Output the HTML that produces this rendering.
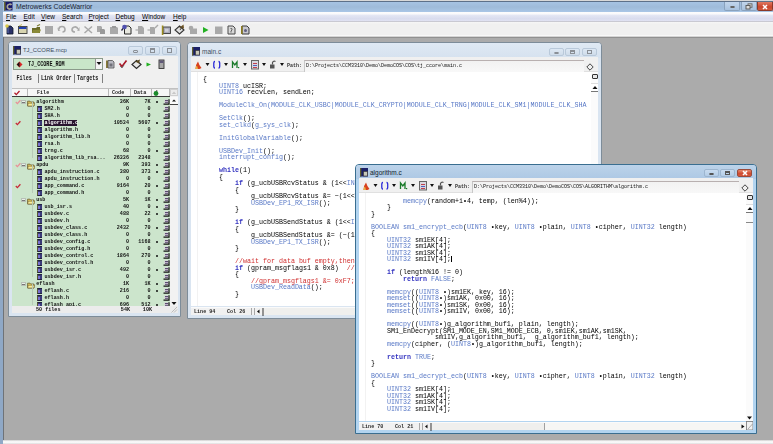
<!DOCTYPE html><html><head><meta charset="utf-8"><style>
*{margin:0;padding:0;box-sizing:border-box}
html,body{width:773px;height:444px;overflow:hidden}
body{position:relative;background:#ababab;font-family:"Liberation Sans",sans-serif;color:#000}
.a{position:absolute}
.mono{font-family:"Liberation Mono",monospace}
.code{position:absolute;font-family:"Liberation Mono",monospace;font-size:6.67px;line-height:6.5px;white-space:pre;color:#000;filter:blur(0.25px)}
.k{color:#5878c6}
.r{color:#d03030}
.b{color:#3434c0;font-weight:bold}
</style></head><body>

<div class="a" style="left:0;top:0;width:773px;height:1px;background:#d8d8d8"></div>
<div class="a" style="left:0;top:1px;width:773px;height:1px;background:#5d7088"></div>
<div class="a" style="left:0;top:2px;width:773px;height:9.5px;background:linear-gradient(#a6c3e3,#9fbbd9 50%,#a9c6e6)"></div>
<div class="a" style="left:0;top:11.5px;width:773px;height:9.5px;background:linear-gradient(#fcfcfd,#fafafc 20%,#e2e5f3 40%,#d9dcee 75%,#e0e2f2)"></div>
<div class="a" style="left:0;top:21px;width:773px;height:1px;background:#c9c9d2"></div>
<div class="a" style="left:0;top:22px;width:773px;height:14px;background:linear-gradient(#f6f6f6,#f0f0f0 15%,#f0f0f0)"></div>
<div class="a" style="left:0;top:35px;width:773px;height:1px;background:#f8f8f8"></div>
<div class="a" style="left:0;top:36px;width:773px;height:1px;background:#d4d4d4"></div>
<div class="a" style="left:0;top:37px;width:773px;height:1px;background:#909090"></div>
<div class="a" style="left:0;top:0;width:3px;height:444px;background:#8fa8c6"></div>
<div class="a" style="left:3px;top:37px;width:1px;height:404px;background:#6f7378"></div>
<div class="a" style="left:3px;top:440px;width:770px;height:4px;background:linear-gradient(#c8c8c8,#f6f6f6 30%,#f8f8f8 70%,#d8d8d8)"></div>
<svg class="a" style="left:4px;top:1.5px" width="9" height="9"><rect x="0" y="0" width="8.5" height="8.5" fill="#18186a"/><rect x="0" y="0" width="1.5" height="8.5" fill="#6a6a30"/><path d="M7.5 3 Q6.8 2 5.5 2.2 Q3.3 2.6 3.3 4.8 Q3.4 7 5.6 7.1 Q6.8 7.1 7.5 6.3" stroke="#a8a898" stroke-width="1.6" fill="none"/></svg>
<div class="a" style="left:16px;top:1.8px;font-size:6.9px;line-height:9px;color:#1a2434">Metrowerks CodeWarrior</div>
<div class="a" style="left:724px;top:2px;width:16px;height:9px;border:1px solid #8aa2bd;border-top:0;border-radius:0 0 2px 2px;background:linear-gradient(#c2d6ec,#a8c2de)"></div>
<div class="a" style="left:729.5px;top:5.5px;width:5.5px;height:2.5px;border:1px solid #666;border-radius:1px;background:#e0e0e0"></div>
<div class="a" style="left:741px;top:2px;width:16px;height:9px;border:1px solid #8aa2bd;border-top:0;border-radius:0 0 2px 2px;background:linear-gradient(#c2d6ec,#a8c2de)"></div>
<svg class="a" style="left:745px;top:3px" width="8" height="7"><rect x="3" y="0.8" width="4" height="3.5" fill="#ccc" stroke="#666" stroke-width="0.9"/><rect x="1" y="2.5" width="4" height="3.5" fill="#ddd" stroke="#555" stroke-width="0.9"/></svg>
<div class="a" style="left:757px;top:2px;width:16px;height:9px;border:1px solid #8a3a2a;border-top:0;border-radius:0 0 2px 2px;background:linear-gradient(#e07a62,#c9462c 60%,#d25a3e)"></div>
<svg class="a" style="left:762px;top:3.5px" width="6" height="6"><path d="M1 1 L5 5 M5 1 L1 5" stroke="#fff" stroke-width="1.5"/></svg>
<div class="a" style="left:6px;top:12px;font-size:6.5px;line-height:9px;color:#000"><span style="text-decoration:underline;text-decoration-thickness:0.6px;text-underline-offset:0.8px">F</span>ile</div>
<div class="a" style="left:23.5px;top:12px;font-size:6.5px;line-height:9px;color:#000"><span style="text-decoration:underline;text-decoration-thickness:0.6px;text-underline-offset:0.8px">E</span>dit</div>
<div class="a" style="left:41px;top:12px;font-size:6.5px;line-height:9px;color:#000"><span style="text-decoration:underline;text-decoration-thickness:0.6px;text-underline-offset:0.8px">V</span>iew</div>
<div class="a" style="left:62px;top:12px;font-size:6.5px;line-height:9px;color:#000"><span style="text-decoration:underline;text-decoration-thickness:0.6px;text-underline-offset:0.8px">S</span>earch</div>
<div class="a" style="left:88.5px;top:12px;font-size:6.5px;line-height:9px;color:#000"><span style="text-decoration:underline;text-decoration-thickness:0.6px;text-underline-offset:0.8px">P</span>roject</div>
<div class="a" style="left:115.5px;top:12px;font-size:6.5px;line-height:9px;color:#000"><span style="text-decoration:underline;text-decoration-thickness:0.6px;text-underline-offset:0.8px">D</span>ebug</div>
<div class="a" style="left:142px;top:12px;font-size:6.5px;line-height:9px;color:#000"><span style="text-decoration:underline;text-decoration-thickness:0.6px;text-underline-offset:0.8px">W</span>indow</div>
<div class="a" style="left:173px;top:12px;font-size:6.5px;line-height:9px;color:#000"><span style="text-decoration:underline;text-decoration-thickness:0.6px;text-underline-offset:0.8px">H</span>elp</div>
<svg class="a" style="left:0;top:22px" width="260" height="14"><path d="M7 4 L11 4 L13 6 L13 12 L7 12Z" fill="#2a3068" stroke="#101828" stroke-width="0.8"/><path d="M8 5.5 L8 11" stroke="#6070b0" stroke-width="1"/><circle cx="7" cy="4" r="1.8" fill="#d8c848"/><rect x="18.5" y="4.5" width="8.5" height="7" fill="#d8d4b0" stroke="#3a3a3a" stroke-width="0.9"/><rect x="19" y="5" width="7.5" height="2" fill="#2040b0"/><path d="M19 4 L22 2.5" stroke="#c8c060" stroke-width="1"/><path d="M32 6 L36 6 L37 5 L40 5 L40 11 L32 11Z" fill="#6a6a28"/><path d="M33 8 L41 7.5 L39.5 11 L32 11Z" fill="#8a8a38"/><path d="M37 4 L40 2.5" stroke="#7a7a30" stroke-width="1.2"/><rect x="45" y="4" width="8" height="8" fill="#a9a9a9"/><path d="M59 7 Q59 4.5 62 4.5 Q65 4.5 65 7.5 Q65 10 62.5 10" stroke="#a9a9a9" stroke-width="1.6" fill="none"/><path d="M57.5 5.5 L60.5 8.5 L58 9Z" fill="#a9a9a9"/><path d="M78 7 Q77 4.5 74.5 5 Q72 5.5 72 8 Q72.5 10 75 10" stroke="#a9a9a9" stroke-width="1.6" fill="none"/><path d="M79.5 5 L77 8.5 L79.5 9Z" fill="#a9a9a9"/><path d="M84.5 4.5 L92 11 M92 4.5 L84.5 11" stroke="#a9a9a9" stroke-width="1.5"/><path d="M97 4 L101 4 L102 5 L102 10 L97 10Z" fill="#a9a9a9"/><path d="M100 7 L104 7 L105 8 L105 12 L100 12Z" fill="#9a9a9a"/><path d="M110 5 L117 5 L118 6 L118 12 L110 12Z" fill="#a9a9a9"/><rect x="112" y="4" width="4" height="2" fill="#999"/><path d="M124.5 4 L129 4 L131 6 L131 12 L124.5 12Z" fill="#e8e8e0" stroke="#2a2a2a" stroke-width="1"/><circle cx="124.5" cy="5" r="2.3" fill="#5050b0"/><path d="M123 6.5 L121.5 8.5" stroke="#202040" stroke-width="1.3"/><path d="M138 4 L142 4 L144 6 L144 12 L138 12Z" fill="#a9a9a9"/><path d="M135.5 8 L138 8" stroke="#a9a9a9" stroke-width="1.2"/><path d="M150 5 L154 5 L155 6 L155 12 L150 12Z" fill="#a9a9a9"/><path d="M155 6 L158 3" stroke="#a9a9a9" stroke-width="1.5"/><path d="M147.5 8 L150 8" stroke="#a9a9a9" stroke-width="1.2"/><rect x="163" y="5" width="7.5" height="6.5" fill="#a8a8b8" stroke="#3a3a3a" stroke-width="0.9"/><rect x="161.8" y="3.5" width="1.6" height="9.5" fill="#9a8a20"/><rect x="165" y="6.8" width="3.5" height="3" fill="#d0d0d8"/><path d="M179.5 4 L184 8 L179.5 12 L175 8Z" fill="#e0e0e0" stroke="#333" stroke-width="1.1"/><path d="M179 6 L183.5 2.5 L184 6.5 Z" fill="#6a5020"/><path d="M180 8 L182 5" stroke="#444" stroke-width="1"/><circle cx="191" cy="6" r="2.3" fill="#a9a9a9"/><rect x="190" y="6.5" width="7" height="5.5" fill="#a9a9a9"/><path d="M203 5 L208.5 8 L203 11Z" fill="#22b022"/><rect x="215" y="4.5" width="7.5" height="7.5" fill="#a9a9a9"/><path d="M228 4 L233 4 L235 6 L235 12 L228 12Z" fill="#d8d8d8" stroke="#4a4a4a" stroke-width="1"/><path d="M230.5 6.5 Q232.5 6 232 8 L231 9 L231 10.5" stroke="#555" stroke-width="0.9" fill="none"/><path d="M242 4 L247 4 L249 6 L249 12 L242 12Z" fill="#c8c8d0" stroke="#3a3a3a" stroke-width="1"/><rect x="241" y="4" width="1.6" height="8" fill="#8a7a20"/><circle cx="245.5" cy="8.5" r="1.5" fill="#606080"/></svg>
<div class="a" style="left:8px;top:41px;width:173px;height:276px;background:#dae5f1;border:1px solid #7d8c99;border-radius:4px 4px 0 0"></div>
<div class="a" style="left:9px;top:42px;width:171px;height:15px;background:linear-gradient(#dfe9f4,#d6e2ef);border-radius:3px 3px 0 0"></div>
<svg class="a" style="left:13px;top:46px" width="9" height="9"><rect x="0" y="0" width="8" height="8.5" fill="#1a2068"/><rect x="0" y="0" width="1.3" height="8.5" fill="#606030"/><rect x="3.5" y="3.5" width="4" height="4.5" fill="#c8c8b8" stroke="#333" stroke-width="0.6"/></svg>
<div class="a" style="left:23px;top:46.2px;font-size:5.9px;line-height:9px;color:#3e4c5c">TJ_CCORE.mcp</div>
<div class="a" style="left:128.0px;top:46.3px;width:15px;height:8.5px;background:linear-gradient(#dde8f4,#cfdcea);border:1px solid #b9c9da;border-radius:2px"></div>
<div class="a" style="left:133.0px;top:50.3px;width:5px;height:2.5px;border:1px solid #8a8f96;border-radius:1px"></div>
<div class="a" style="left:144.8px;top:46.3px;width:15px;height:8.5px;background:linear-gradient(#dde8f4,#cfdcea);border:1px solid #b9c9da;border-radius:2px"></div>
<div class="a" style="left:149.8px;top:48.3px;width:5px;height:4.5px;border:1px solid #8a8f96;border-top-width:2px"></div>
<div class="a" style="left:161.5px;top:46.3px;width:15px;height:8.5px;background:linear-gradient(#dde8f4,#cfdcea);border:1px solid #b9c9da;border-radius:2px"></div>
<div class="a" style="left:166.5px;top:48.3px;width:5px;height:4.5px;border:1px solid #8a8f96"></div>
<div class="a" style="left:12px;top:56px;width:166px;height:256px;background:#f0f0f0"></div>
<div class="a" style="left:13px;top:57.5px;width:90px;height:12px;background:#c9e6c9;border:1px solid #8a9a8a"></div>
<div class="a" style="left:95px;top:58.5px;width:7px;height:10px;background:#f4f4f4;border-left:1px solid #999"></div>
<svg class="a" style="left:96px;top:61px" width="6" height="5"><path d="M0.5 1 L5.5 1 L3 4Z" fill="#111"/></svg>
<svg class="a" style="left:16px;top:60.5px" width="7" height="7"><path d="M3.5 0.5 L6.5 3.5 L3.5 6.5 L0.5 3.5Z" fill="#d82828"/><path d="M3.5 0.8 L3.5 6.2 L0.8 3.5Z" fill="#151515"/></svg>
<div class="a mono" style="left:28px;top:62px;font-size:5.1px;line-height:6px;font-weight:bold;color:#111;transform:scaleY(1.25);transform-origin:0 50%">TJ_CCORE_ROM</div>
<svg class="a" style="left:104px;top:58px" width="64" height="12"><rect x="2" y="2.5" width="2" height="7.5" fill="#8a7c38"/><path d="M4 2.5 L8.5 2.5 L10 4 L10 10 L4 10Z" fill="#b8b8c0" stroke="#505050" stroke-width="0.8"/><rect x="5.5" y="5.5" width="3" height="3" fill="#707078"/><path d="M15.5 5.5 L18 8.5 L22.5 2.5" stroke="#a81828" stroke-width="1.7" fill="none"/><path d="M16 8 L18 10 L20 7" stroke="#606060" stroke-width="0.8" fill="none"/><path d="M32.5 2.5 L37 6.5 L32.5 10.5 L28 6.5Z" fill="#e8e8e8" stroke="#2a2a2a" stroke-width="1.2"/><path d="M31 3.5 L36 1.5 L35 5.5Z" fill="#5a4a20"/><path d="M42.5 4.5 L47 6.5 L42.5 8.5Z" fill="#22b022"/><rect x="55" y="2" width="5" height="8.5" fill="#a8a8a8" stroke="#333" stroke-width="0.9"/><rect x="55.5" y="2.5" width="4" height="2.5" fill="#605878"/></svg>
<div class="a mono" style="left:16.5px;top:75px;font-size:5.1px;line-height:6px;font-weight:bold;color:#222;transform:scaleY(1.25);transform-origin:0 0">Files</div>
<div class="a" style="left:38.3px;top:74px;width:1px;height:9px;background:#808080"></div>
<div class="a mono" style="left:41px;top:75px;font-size:5.1px;line-height:6px;font-weight:bold;color:#222;transform:scaleY(1.25);transform-origin:0 0">Link Order</div>
<div class="a" style="left:73.8px;top:74px;width:1px;height:9px;background:#808080"></div>
<div class="a mono" style="left:77px;top:75px;font-size:5.1px;line-height:6px;font-weight:bold;color:#222;transform:scaleY(1.25);transform-origin:0 0">Targets</div>
<div class="a" style="left:101.5px;top:74px;width:1px;height:9px;background:#808080"></div>
<div class="a" style="left:12px;top:87.5px;width:166px;height:9px;background:#f6f6f6;border-top:1px solid #c0c0c0;border-bottom:1.2px solid #404040"></div>
<div class="a" style="left:27px;top:89px;width:1px;height:7px;background:#b8b8b8"></div>
<div class="a" style="left:107.5px;top:89px;width:1px;height:7px;background:#b8b8b8"></div>
<div class="a" style="left:129.5px;top:89px;width:1px;height:7px;background:#b8b8b8"></div>
<div class="a" style="left:151px;top:89px;width:1px;height:7px;background:#b8b8b8"></div>
<div class="a" style="left:169px;top:89px;width:1px;height:7px;background:#b8b8b8"></div>
<svg class="a" style="left:14px;top:90px" width="6" height="6"><path d="M0.5 2.8 L2.3 4.6 L5.5 1" stroke="#b01828" stroke-width="1.3" fill="none"/></svg>
<div class="a mono" style="left:37px;top:90px;font-size:5.1px;line-height:6px;font-weight:bold;color:#222;transform:scaleY(1.2);transform-origin:0 50%">File</div>
<div class="a mono" style="left:112px;top:90px;font-size:5.1px;line-height:6px;font-weight:bold;color:#222;transform:scaleY(1.2);transform-origin:0 50%">Code</div>
<div class="a mono" style="left:134px;top:90px;font-size:5.1px;line-height:6px;font-weight:bold;color:#222;transform:scaleY(1.2);transform-origin:0 50%">Data</div>
<svg class="a" style="left:152.5px;top:89.5px" width="6" height="6"><circle cx="3" cy="3.5" r="2.4" fill="#1a8a2a"/><path d="M3 1.2 L4.5 0" stroke="#222" stroke-width="0.8"/></svg>
<div class="a" style="left:12px;top:96px;width:158px;height:210px;background:#cce5cc"></div>
<div class="a" style="left:170px;top:96px;width:7.5px;height:210px;background:#f2f2f2"></div>
<div class="a" style="left:170px;top:97px;width:7.5px;height:7.5px;background:#fafafa;border-bottom:1px solid #444"></div><svg class="a" style="left:171px;top:98px" width="6" height="5"><path d="M1 3.6 L5 3.6 L3 1.4Z" fill="#111"/></svg>
<svg class="a" style="left:171px;top:301px" width="6" height="5"><path d="M0.5 1 L5.5 1 L3 4Z" fill="#111"/></svg>
<div class="a" style="left:170px;top:88.5px;width:7.5px;height:7.5px;background:#ececec;border:1px solid #d0d0d0"></div><svg class="a" style="left:171px;top:89.5px" width="6" height="5"><path d="M0.8 4 L5.2 4 L3 1.5Z" fill="#c8c8c8"/></svg>
<div class="a" style="left:12px;top:96px;width:158px;height:210px;overflow:hidden">
<svg class="a" style="left:3px;top:3.0px" width="6" height="6"><path d="M0.8 3 L2.4 4.6 L5.4 1.2" stroke="#e89098" stroke-width="1.3" fill="none"/></svg>
<div class="a" style="left:9.3px;top:3.8px;width:4.5px;height:4.5px;border:1px solid #b8c0b8;background:#e8f0e8"></div>
<div class="a" style="left:10.3px;top:5.8px;width:2.5px;height:0.8px;background:#777"></div>
<svg class="a" style="left:15px;top:3.5px" width="8" height="7"><path d="M0.6 1.2 L3 1.2 L3.8 2 L7 2 L7 6 L0.6 6Z" fill="#e8d060" stroke="#6a5a30" stroke-width="0.8"/><path d="M1.2 3.2 L7.6 3.2 L6.8 6 L0.6 6Z" fill="#f8ec98" stroke="#6a5a30" stroke-width="0.6"/></svg>
<div class="a mono" style="left:24.2px;top:3.0px;font-size:5.1px;line-height:6px;font-weight:bold;transform:scaleY(1.2);transform-origin:0 50%;color:#111">algorithm</div>
<div class="a mono" style="left:80px;width:37px;text-align:right;top:3.0px;font-size:5.1px;line-height:6px;font-weight:bold;transform:scaleY(1.2);transform-origin:0 50%;transform-origin:100% 50%;color:#111">36K</div>
<div class="a mono" style="left:110px;width:28.5px;text-align:right;top:3.0px;font-size:5.1px;line-height:6px;font-weight:bold;transform:scaleY(1.2);transform-origin:0 50%;transform-origin:100% 50%;color:#111">7K</div>
<div class="a" style="left:144.3px;top:4.9px;width:2px;height:2px;background:#111;border-radius:50%"></div>
<svg class="a" style="left:151px;top:3.3px" width="7" height="6"><rect x="1.5" y="0.5" width="4" height="4" fill="#d8d0dc"/><rect x="2" y="1" width="3" height="1" fill="#5a4a70"/><rect x="2" y="2.8" width="3" height="1" fill="#5a4a70"/><path d="M0.5 5.2 L6 5.2 L6 0.3" stroke="#111" stroke-width="1.2" fill="none"/></svg>
<div class="a" style="left:19.5px;top:6.0px;width:1px;height:7px;background:#b8cab8"></div>
<div class="a" style="left:24.5px;top:10.3px;width:5px;height:5.8px;background:#3a3a78;border-left:1px solid #5a5a30;border-top:1px solid #202040;border-bottom:1px solid #202040"></div>
<div class="a" style="left:26px;top:11.8px;width:2px;height:2.8px;background:#7a70d0"></div>
<div class="a mono" style="left:32.5px;top:10.0px;font-size:5.1px;line-height:6px;font-weight:bold;transform:scaleY(1.2);transform-origin:0 50%;color:#111">SM2.h</div>
<div class="a mono" style="left:80px;width:37px;text-align:right;top:10.0px;font-size:5.1px;line-height:6px;font-weight:bold;transform:scaleY(1.2);transform-origin:0 50%;transform-origin:100% 50%;color:#111">0</div>
<div class="a mono" style="left:110px;width:28.5px;text-align:right;top:10.0px;font-size:5.1px;line-height:6px;font-weight:bold;transform:scaleY(1.2);transform-origin:0 50%;transform-origin:100% 50%;color:#111">0</div>
<svg class="a" style="left:151px;top:10.3px" width="7" height="6"><rect x="1.5" y="0.5" width="4" height="4" fill="#d8d0dc"/><rect x="2" y="1" width="3" height="1" fill="#5a4a70"/><rect x="2" y="2.8" width="3" height="1" fill="#5a4a70"/><path d="M0.5 5.2 L6 5.2 L6 0.3" stroke="#111" stroke-width="1.2" fill="none"/></svg>
<div class="a" style="left:19.5px;top:13.0px;width:1px;height:7px;background:#b8cab8"></div>
<div class="a" style="left:24.5px;top:17.3px;width:5px;height:5.8px;background:#3a3a78;border-left:1px solid #5a5a30;border-top:1px solid #202040;border-bottom:1px solid #202040"></div>
<div class="a" style="left:26px;top:18.8px;width:2px;height:2.8px;background:#7a70d0"></div>
<div class="a mono" style="left:32.5px;top:17.0px;font-size:5.1px;line-height:6px;font-weight:bold;transform:scaleY(1.2);transform-origin:0 50%;color:#111">SHA.h</div>
<div class="a mono" style="left:80px;width:37px;text-align:right;top:17.0px;font-size:5.1px;line-height:6px;font-weight:bold;transform:scaleY(1.2);transform-origin:0 50%;transform-origin:100% 50%;color:#111">0</div>
<div class="a mono" style="left:110px;width:28.5px;text-align:right;top:17.0px;font-size:5.1px;line-height:6px;font-weight:bold;transform:scaleY(1.2);transform-origin:0 50%;transform-origin:100% 50%;color:#111">0</div>
<svg class="a" style="left:151px;top:17.3px" width="7" height="6"><rect x="1.5" y="0.5" width="4" height="4" fill="#d8d0dc"/><rect x="2" y="1" width="3" height="1" fill="#5a4a70"/><rect x="2" y="2.8" width="3" height="1" fill="#5a4a70"/><path d="M0.5 5.2 L6 5.2 L6 0.3" stroke="#111" stroke-width="1.2" fill="none"/></svg>
<svg class="a" style="left:3px;top:24.0px" width="6" height="6"><path d="M0.8 3 L2.4 4.6 L5.4 1.2" stroke="#c82838" stroke-width="1.3" fill="none"/></svg>
<div class="a" style="left:19.5px;top:20.0px;width:1px;height:7px;background:#b8cab8"></div>
<div class="a" style="left:24.5px;top:24.3px;width:5px;height:5.8px;background:#3a3a78;border-left:1px solid #5a5a30;border-top:1px solid #202040;border-bottom:1px solid #202040"></div>
<div class="a" style="left:26px;top:25.8px;width:2px;height:2.8px;background:#7a70d0"></div>
<div class="a" style="left:32px;top:23.7px;width:33.4px;height:6px;background:#2a1530"></div>
<div class="a mono" style="left:32.5px;top:24.0px;font-size:5.1px;line-height:6px;font-weight:bold;transform:scaleY(1.2);transform-origin:0 50%;color:#fff">algorithm.c</div>
<div class="a mono" style="left:80px;width:37px;text-align:right;top:24.0px;font-size:5.1px;line-height:6px;font-weight:bold;transform:scaleY(1.2);transform-origin:0 50%;transform-origin:100% 50%;color:#111">10534</div>
<div class="a mono" style="left:110px;width:28.5px;text-align:right;top:24.0px;font-size:5.1px;line-height:6px;font-weight:bold;transform:scaleY(1.2);transform-origin:0 50%;transform-origin:100% 50%;color:#111">5607</div>
<div class="a" style="left:144.3px;top:25.9px;width:2px;height:2px;background:#111;border-radius:50%"></div>
<svg class="a" style="left:151px;top:24.3px" width="7" height="6"><rect x="1.5" y="0.5" width="4" height="4" fill="#d8d0dc"/><rect x="2" y="1" width="3" height="1" fill="#5a4a70"/><rect x="2" y="2.8" width="3" height="1" fill="#5a4a70"/><path d="M0.5 5.2 L6 5.2 L6 0.3" stroke="#111" stroke-width="1.2" fill="none"/></svg>
<div class="a" style="left:19.5px;top:27.0px;width:1px;height:7px;background:#b8cab8"></div>
<div class="a" style="left:24.5px;top:31.3px;width:5px;height:5.8px;background:#3a3a78;border-left:1px solid #5a5a30;border-top:1px solid #202040;border-bottom:1px solid #202040"></div>
<div class="a" style="left:26px;top:32.8px;width:2px;height:2.8px;background:#7a70d0"></div>
<div class="a mono" style="left:32.5px;top:31.0px;font-size:5.1px;line-height:6px;font-weight:bold;transform:scaleY(1.2);transform-origin:0 50%;color:#111">algorithm.h</div>
<div class="a mono" style="left:80px;width:37px;text-align:right;top:31.0px;font-size:5.1px;line-height:6px;font-weight:bold;transform:scaleY(1.2);transform-origin:0 50%;transform-origin:100% 50%;color:#111">0</div>
<div class="a mono" style="left:110px;width:28.5px;text-align:right;top:31.0px;font-size:5.1px;line-height:6px;font-weight:bold;transform:scaleY(1.2);transform-origin:0 50%;transform-origin:100% 50%;color:#111">0</div>
<svg class="a" style="left:151px;top:31.3px" width="7" height="6"><rect x="1.5" y="0.5" width="4" height="4" fill="#d8d0dc"/><rect x="2" y="1" width="3" height="1" fill="#5a4a70"/><rect x="2" y="2.8" width="3" height="1" fill="#5a4a70"/><path d="M0.5 5.2 L6 5.2 L6 0.3" stroke="#111" stroke-width="1.2" fill="none"/></svg>
<div class="a" style="left:19.5px;top:34.0px;width:1px;height:7px;background:#b8cab8"></div>
<div class="a" style="left:24.5px;top:38.3px;width:5px;height:5.8px;background:#3a3a78;border-left:1px solid #5a5a30;border-top:1px solid #202040;border-bottom:1px solid #202040"></div>
<div class="a" style="left:26px;top:39.8px;width:2px;height:2.8px;background:#7a70d0"></div>
<div class="a mono" style="left:32.5px;top:38.0px;font-size:5.1px;line-height:6px;font-weight:bold;transform:scaleY(1.2);transform-origin:0 50%;color:#111">algorithm_lib.h</div>
<div class="a mono" style="left:80px;width:37px;text-align:right;top:38.0px;font-size:5.1px;line-height:6px;font-weight:bold;transform:scaleY(1.2);transform-origin:0 50%;transform-origin:100% 50%;color:#111">0</div>
<div class="a mono" style="left:110px;width:28.5px;text-align:right;top:38.0px;font-size:5.1px;line-height:6px;font-weight:bold;transform:scaleY(1.2);transform-origin:0 50%;transform-origin:100% 50%;color:#111">0</div>
<svg class="a" style="left:151px;top:38.3px" width="7" height="6"><rect x="1.5" y="0.5" width="4" height="4" fill="#d8d0dc"/><rect x="2" y="1" width="3" height="1" fill="#5a4a70"/><rect x="2" y="2.8" width="3" height="1" fill="#5a4a70"/><path d="M0.5 5.2 L6 5.2 L6 0.3" stroke="#111" stroke-width="1.2" fill="none"/></svg>
<div class="a" style="left:19.5px;top:41.0px;width:1px;height:7px;background:#b8cab8"></div>
<div class="a" style="left:24.5px;top:45.3px;width:5px;height:5.8px;background:#3a3a78;border-left:1px solid #5a5a30;border-top:1px solid #202040;border-bottom:1px solid #202040"></div>
<div class="a" style="left:26px;top:46.8px;width:2px;height:2.8px;background:#7a70d0"></div>
<div class="a mono" style="left:32.5px;top:45.0px;font-size:5.1px;line-height:6px;font-weight:bold;transform:scaleY(1.2);transform-origin:0 50%;color:#111">rsa.h</div>
<div class="a mono" style="left:80px;width:37px;text-align:right;top:45.0px;font-size:5.1px;line-height:6px;font-weight:bold;transform:scaleY(1.2);transform-origin:0 50%;transform-origin:100% 50%;color:#111">0</div>
<div class="a mono" style="left:110px;width:28.5px;text-align:right;top:45.0px;font-size:5.1px;line-height:6px;font-weight:bold;transform:scaleY(1.2);transform-origin:0 50%;transform-origin:100% 50%;color:#111">0</div>
<svg class="a" style="left:151px;top:45.3px" width="7" height="6"><rect x="1.5" y="0.5" width="4" height="4" fill="#d8d0dc"/><rect x="2" y="1" width="3" height="1" fill="#5a4a70"/><rect x="2" y="2.8" width="3" height="1" fill="#5a4a70"/><path d="M0.5 5.2 L6 5.2 L6 0.3" stroke="#111" stroke-width="1.2" fill="none"/></svg>
<div class="a" style="left:19.5px;top:48.0px;width:1px;height:7px;background:#b8cab8"></div>
<div class="a" style="left:24.5px;top:52.3px;width:5px;height:5.8px;background:#3a3a78;border-left:1px solid #5a5a30;border-top:1px solid #202040;border-bottom:1px solid #202040"></div>
<div class="a" style="left:26px;top:53.8px;width:2px;height:2.8px;background:#7a70d0"></div>
<div class="a mono" style="left:32.5px;top:52.0px;font-size:5.1px;line-height:6px;font-weight:bold;transform:scaleY(1.2);transform-origin:0 50%;color:#111">trng.c</div>
<div class="a mono" style="left:80px;width:37px;text-align:right;top:52.0px;font-size:5.1px;line-height:6px;font-weight:bold;transform:scaleY(1.2);transform-origin:0 50%;transform-origin:100% 50%;color:#111">68</div>
<div class="a mono" style="left:110px;width:28.5px;text-align:right;top:52.0px;font-size:5.1px;line-height:6px;font-weight:bold;transform:scaleY(1.2);transform-origin:0 50%;transform-origin:100% 50%;color:#111">0</div>
<div class="a" style="left:144.3px;top:53.9px;width:2px;height:2px;background:#111;border-radius:50%"></div>
<svg class="a" style="left:151px;top:52.3px" width="7" height="6"><rect x="1.5" y="0.5" width="4" height="4" fill="#d8d0dc"/><rect x="2" y="1" width="3" height="1" fill="#5a4a70"/><rect x="2" y="2.8" width="3" height="1" fill="#5a4a70"/><path d="M0.5 5.2 L6 5.2 L6 0.3" stroke="#111" stroke-width="1.2" fill="none"/></svg>
<div class="a" style="left:19.5px;top:55.0px;width:1px;height:7px;background:#b8cab8"></div>
<div class="a" style="left:24.5px;top:59.3px;width:5px;height:5.8px;background:#3a3a78;border-left:1px solid #5a5a30;border-top:1px solid #202040;border-bottom:1px solid #202040"></div>
<div class="a" style="left:26px;top:60.8px;width:2px;height:2.8px;background:#7a70d0"></div>
<div class="a mono" style="left:32.5px;top:59.0px;font-size:5.1px;line-height:6px;font-weight:bold;transform:scaleY(1.2);transform-origin:0 50%;color:#111">algorithm_lib_rsa...</div>
<div class="a mono" style="left:80px;width:37px;text-align:right;top:59.0px;font-size:5.1px;line-height:6px;font-weight:bold;transform:scaleY(1.2);transform-origin:0 50%;transform-origin:100% 50%;color:#111">26336</div>
<div class="a mono" style="left:110px;width:28.5px;text-align:right;top:59.0px;font-size:5.1px;line-height:6px;font-weight:bold;transform:scaleY(1.2);transform-origin:0 50%;transform-origin:100% 50%;color:#111">2348</div>
<svg class="a" style="left:151px;top:59.3px" width="7" height="6"><rect x="1.5" y="0.5" width="4" height="4" fill="#d8d0dc"/><rect x="2" y="1" width="3" height="1" fill="#5a4a70"/><rect x="2" y="2.8" width="3" height="1" fill="#5a4a70"/><path d="M0.5 5.2 L6 5.2 L6 0.3" stroke="#111" stroke-width="1.2" fill="none"/></svg>
<svg class="a" style="left:3px;top:66.0px" width="6" height="6"><path d="M0.8 3 L2.4 4.6 L5.4 1.2" stroke="#e89098" stroke-width="1.3" fill="none"/></svg>
<div class="a" style="left:9.3px;top:66.8px;width:4.5px;height:4.5px;border:1px solid #b8c0b8;background:#e8f0e8"></div>
<div class="a" style="left:10.3px;top:68.8px;width:2.5px;height:0.8px;background:#777"></div>
<svg class="a" style="left:15px;top:66.5px" width="8" height="7"><path d="M0.6 1.2 L3 1.2 L3.8 2 L7 2 L7 6 L0.6 6Z" fill="#e8d060" stroke="#6a5a30" stroke-width="0.8"/><path d="M1.2 3.2 L7.6 3.2 L6.8 6 L0.6 6Z" fill="#f8ec98" stroke="#6a5a30" stroke-width="0.6"/></svg>
<div class="a mono" style="left:24.2px;top:66.0px;font-size:5.1px;line-height:6px;font-weight:bold;transform:scaleY(1.2);transform-origin:0 50%;color:#111">apdu</div>
<div class="a mono" style="left:80px;width:37px;text-align:right;top:66.0px;font-size:5.1px;line-height:6px;font-weight:bold;transform:scaleY(1.2);transform-origin:0 50%;transform-origin:100% 50%;color:#111">9K</div>
<div class="a mono" style="left:110px;width:28.5px;text-align:right;top:66.0px;font-size:5.1px;line-height:6px;font-weight:bold;transform:scaleY(1.2);transform-origin:0 50%;transform-origin:100% 50%;color:#111">393</div>
<div class="a" style="left:144.3px;top:67.9px;width:2px;height:2px;background:#111;border-radius:50%"></div>
<svg class="a" style="left:151px;top:66.3px" width="7" height="6"><rect x="1.5" y="0.5" width="4" height="4" fill="#d8d0dc"/><rect x="2" y="1" width="3" height="1" fill="#5a4a70"/><rect x="2" y="2.8" width="3" height="1" fill="#5a4a70"/><path d="M0.5 5.2 L6 5.2 L6 0.3" stroke="#111" stroke-width="1.2" fill="none"/></svg>
<div class="a" style="left:19.5px;top:69.0px;width:1px;height:7px;background:#b8cab8"></div>
<div class="a" style="left:24.5px;top:73.3px;width:5px;height:5.8px;background:#3a3a78;border-left:1px solid #5a5a30;border-top:1px solid #202040;border-bottom:1px solid #202040"></div>
<div class="a" style="left:26px;top:74.8px;width:2px;height:2.8px;background:#7a70d0"></div>
<div class="a mono" style="left:32.5px;top:73.0px;font-size:5.1px;line-height:6px;font-weight:bold;transform:scaleY(1.2);transform-origin:0 50%;color:#111">apdu_instruction.c</div>
<div class="a mono" style="left:80px;width:37px;text-align:right;top:73.0px;font-size:5.1px;line-height:6px;font-weight:bold;transform:scaleY(1.2);transform-origin:0 50%;transform-origin:100% 50%;color:#111">380</div>
<div class="a mono" style="left:110px;width:28.5px;text-align:right;top:73.0px;font-size:5.1px;line-height:6px;font-weight:bold;transform:scaleY(1.2);transform-origin:0 50%;transform-origin:100% 50%;color:#111">373</div>
<div class="a" style="left:144.3px;top:74.9px;width:2px;height:2px;background:#111;border-radius:50%"></div>
<svg class="a" style="left:151px;top:73.3px" width="7" height="6"><rect x="1.5" y="0.5" width="4" height="4" fill="#d8d0dc"/><rect x="2" y="1" width="3" height="1" fill="#5a4a70"/><rect x="2" y="2.8" width="3" height="1" fill="#5a4a70"/><path d="M0.5 5.2 L6 5.2 L6 0.3" stroke="#111" stroke-width="1.2" fill="none"/></svg>
<div class="a" style="left:19.5px;top:76.0px;width:1px;height:7px;background:#b8cab8"></div>
<div class="a" style="left:24.5px;top:80.3px;width:5px;height:5.8px;background:#3a3a78;border-left:1px solid #5a5a30;border-top:1px solid #202040;border-bottom:1px solid #202040"></div>
<div class="a" style="left:26px;top:81.8px;width:2px;height:2.8px;background:#7a70d0"></div>
<div class="a mono" style="left:32.5px;top:80.0px;font-size:5.1px;line-height:6px;font-weight:bold;transform:scaleY(1.2);transform-origin:0 50%;color:#111">apdu_instruction.h</div>
<div class="a mono" style="left:80px;width:37px;text-align:right;top:80.0px;font-size:5.1px;line-height:6px;font-weight:bold;transform:scaleY(1.2);transform-origin:0 50%;transform-origin:100% 50%;color:#111">0</div>
<div class="a mono" style="left:110px;width:28.5px;text-align:right;top:80.0px;font-size:5.1px;line-height:6px;font-weight:bold;transform:scaleY(1.2);transform-origin:0 50%;transform-origin:100% 50%;color:#111">0</div>
<svg class="a" style="left:151px;top:80.3px" width="7" height="6"><rect x="1.5" y="0.5" width="4" height="4" fill="#d8d0dc"/><rect x="2" y="1" width="3" height="1" fill="#5a4a70"/><rect x="2" y="2.8" width="3" height="1" fill="#5a4a70"/><path d="M0.5 5.2 L6 5.2 L6 0.3" stroke="#111" stroke-width="1.2" fill="none"/></svg>
<svg class="a" style="left:3px;top:87.0px" width="6" height="6"><path d="M0.8 3 L2.4 4.6 L5.4 1.2" stroke="#c82838" stroke-width="1.3" fill="none"/></svg>
<div class="a" style="left:19.5px;top:83.0px;width:1px;height:7px;background:#b8cab8"></div>
<div class="a" style="left:24.5px;top:87.3px;width:5px;height:5.8px;background:#3a3a78;border-left:1px solid #5a5a30;border-top:1px solid #202040;border-bottom:1px solid #202040"></div>
<div class="a" style="left:26px;top:88.8px;width:2px;height:2.8px;background:#7a70d0"></div>
<div class="a mono" style="left:32.5px;top:87.0px;font-size:5.1px;line-height:6px;font-weight:bold;transform:scaleY(1.2);transform-origin:0 50%;color:#111">app_command.c</div>
<div class="a mono" style="left:80px;width:37px;text-align:right;top:87.0px;font-size:5.1px;line-height:6px;font-weight:bold;transform:scaleY(1.2);transform-origin:0 50%;transform-origin:100% 50%;color:#111">9164</div>
<div class="a mono" style="left:110px;width:28.5px;text-align:right;top:87.0px;font-size:5.1px;line-height:6px;font-weight:bold;transform:scaleY(1.2);transform-origin:0 50%;transform-origin:100% 50%;color:#111">20</div>
<div class="a" style="left:144.3px;top:88.9px;width:2px;height:2px;background:#111;border-radius:50%"></div>
<svg class="a" style="left:151px;top:87.3px" width="7" height="6"><rect x="1.5" y="0.5" width="4" height="4" fill="#d8d0dc"/><rect x="2" y="1" width="3" height="1" fill="#5a4a70"/><rect x="2" y="2.8" width="3" height="1" fill="#5a4a70"/><path d="M0.5 5.2 L6 5.2 L6 0.3" stroke="#111" stroke-width="1.2" fill="none"/></svg>
<div class="a" style="left:19.5px;top:90.0px;width:1px;height:7px;background:#b8cab8"></div>
<div class="a" style="left:24.5px;top:94.3px;width:5px;height:5.8px;background:#3a3a78;border-left:1px solid #5a5a30;border-top:1px solid #202040;border-bottom:1px solid #202040"></div>
<div class="a" style="left:26px;top:95.8px;width:2px;height:2.8px;background:#7a70d0"></div>
<div class="a mono" style="left:32.5px;top:94.0px;font-size:5.1px;line-height:6px;font-weight:bold;transform:scaleY(1.2);transform-origin:0 50%;color:#111">app_command.h</div>
<div class="a mono" style="left:80px;width:37px;text-align:right;top:94.0px;font-size:5.1px;line-height:6px;font-weight:bold;transform:scaleY(1.2);transform-origin:0 50%;transform-origin:100% 50%;color:#111">0</div>
<div class="a mono" style="left:110px;width:28.5px;text-align:right;top:94.0px;font-size:5.1px;line-height:6px;font-weight:bold;transform:scaleY(1.2);transform-origin:0 50%;transform-origin:100% 50%;color:#111">0</div>
<svg class="a" style="left:151px;top:94.3px" width="7" height="6"><rect x="1.5" y="0.5" width="4" height="4" fill="#d8d0dc"/><rect x="2" y="1" width="3" height="1" fill="#5a4a70"/><rect x="2" y="2.8" width="3" height="1" fill="#5a4a70"/><path d="M0.5 5.2 L6 5.2 L6 0.3" stroke="#111" stroke-width="1.2" fill="none"/></svg>
<div class="a" style="left:9.3px;top:101.8px;width:4.5px;height:4.5px;border:1px solid #b8c0b8;background:#e8f0e8"></div>
<div class="a" style="left:10.3px;top:103.8px;width:2.5px;height:0.8px;background:#777"></div>
<svg class="a" style="left:15px;top:101.5px" width="8" height="7"><path d="M0.6 1.2 L3 1.2 L3.8 2 L7 2 L7 6 L0.6 6Z" fill="#e8d060" stroke="#6a5a30" stroke-width="0.8"/><path d="M1.2 3.2 L7.6 3.2 L6.8 6 L0.6 6Z" fill="#f8ec98" stroke="#6a5a30" stroke-width="0.6"/></svg>
<div class="a mono" style="left:24.2px;top:101.0px;font-size:5.1px;line-height:6px;font-weight:bold;transform:scaleY(1.2);transform-origin:0 50%;color:#111">usb</div>
<div class="a mono" style="left:80px;width:37px;text-align:right;top:101.0px;font-size:5.1px;line-height:6px;font-weight:bold;transform:scaleY(1.2);transform-origin:0 50%;transform-origin:100% 50%;color:#111">5K</div>
<div class="a mono" style="left:110px;width:28.5px;text-align:right;top:101.0px;font-size:5.1px;line-height:6px;font-weight:bold;transform:scaleY(1.2);transform-origin:0 50%;transform-origin:100% 50%;color:#111">1K</div>
<div class="a" style="left:144.3px;top:102.9px;width:2px;height:2px;background:#111;border-radius:50%"></div>
<svg class="a" style="left:151px;top:101.3px" width="7" height="6"><rect x="1.5" y="0.5" width="4" height="4" fill="#d8d0dc"/><rect x="2" y="1" width="3" height="1" fill="#5a4a70"/><rect x="2" y="2.8" width="3" height="1" fill="#5a4a70"/><path d="M0.5 5.2 L6 5.2 L6 0.3" stroke="#111" stroke-width="1.2" fill="none"/></svg>
<div class="a" style="left:19.5px;top:104.0px;width:1px;height:7px;background:#b8cab8"></div>
<div class="a" style="left:24.5px;top:108.3px;width:5px;height:5.8px;background:#3a3a78;border-left:1px solid #5a5a30;border-top:1px solid #202040;border-bottom:1px solid #202040"></div>
<div class="a" style="left:26px;top:109.8px;width:2px;height:2.8px;background:#7a70d0"></div>
<div class="a mono" style="left:32.5px;top:108.0px;font-size:5.1px;line-height:6px;font-weight:bold;transform:scaleY(1.2);transform-origin:0 50%;color:#111">usb_isr.s</div>
<div class="a mono" style="left:80px;width:37px;text-align:right;top:108.0px;font-size:5.1px;line-height:6px;font-weight:bold;transform:scaleY(1.2);transform-origin:0 50%;transform-origin:100% 50%;color:#111">40</div>
<div class="a mono" style="left:110px;width:28.5px;text-align:right;top:108.0px;font-size:5.1px;line-height:6px;font-weight:bold;transform:scaleY(1.2);transform-origin:0 50%;transform-origin:100% 50%;color:#111">0</div>
<div class="a" style="left:144.3px;top:109.9px;width:2px;height:2px;background:#111;border-radius:50%"></div>
<svg class="a" style="left:151px;top:108.3px" width="7" height="6"><rect x="1.5" y="0.5" width="4" height="4" fill="#d8d0dc"/><rect x="2" y="1" width="3" height="1" fill="#5a4a70"/><rect x="2" y="2.8" width="3" height="1" fill="#5a4a70"/><path d="M0.5 5.2 L6 5.2 L6 0.3" stroke="#111" stroke-width="1.2" fill="none"/></svg>
<div class="a" style="left:19.5px;top:111.0px;width:1px;height:7px;background:#b8cab8"></div>
<div class="a" style="left:24.5px;top:115.3px;width:5px;height:5.8px;background:#3a3a78;border-left:1px solid #5a5a30;border-top:1px solid #202040;border-bottom:1px solid #202040"></div>
<div class="a" style="left:26px;top:116.8px;width:2px;height:2.8px;background:#7a70d0"></div>
<div class="a mono" style="left:32.5px;top:115.0px;font-size:5.1px;line-height:6px;font-weight:bold;transform:scaleY(1.2);transform-origin:0 50%;color:#111">usbdev.c</div>
<div class="a mono" style="left:80px;width:37px;text-align:right;top:115.0px;font-size:5.1px;line-height:6px;font-weight:bold;transform:scaleY(1.2);transform-origin:0 50%;transform-origin:100% 50%;color:#111">488</div>
<div class="a mono" style="left:110px;width:28.5px;text-align:right;top:115.0px;font-size:5.1px;line-height:6px;font-weight:bold;transform:scaleY(1.2);transform-origin:0 50%;transform-origin:100% 50%;color:#111">22</div>
<div class="a" style="left:144.3px;top:116.9px;width:2px;height:2px;background:#111;border-radius:50%"></div>
<svg class="a" style="left:151px;top:115.3px" width="7" height="6"><rect x="1.5" y="0.5" width="4" height="4" fill="#d8d0dc"/><rect x="2" y="1" width="3" height="1" fill="#5a4a70"/><rect x="2" y="2.8" width="3" height="1" fill="#5a4a70"/><path d="M0.5 5.2 L6 5.2 L6 0.3" stroke="#111" stroke-width="1.2" fill="none"/></svg>
<div class="a" style="left:19.5px;top:118.0px;width:1px;height:7px;background:#b8cab8"></div>
<div class="a" style="left:24.5px;top:122.3px;width:5px;height:5.8px;background:#3a3a78;border-left:1px solid #5a5a30;border-top:1px solid #202040;border-bottom:1px solid #202040"></div>
<div class="a" style="left:26px;top:123.8px;width:2px;height:2.8px;background:#7a70d0"></div>
<div class="a mono" style="left:32.5px;top:122.0px;font-size:5.1px;line-height:6px;font-weight:bold;transform:scaleY(1.2);transform-origin:0 50%;color:#111">usbdev.h</div>
<div class="a mono" style="left:80px;width:37px;text-align:right;top:122.0px;font-size:5.1px;line-height:6px;font-weight:bold;transform:scaleY(1.2);transform-origin:0 50%;transform-origin:100% 50%;color:#111">0</div>
<div class="a mono" style="left:110px;width:28.5px;text-align:right;top:122.0px;font-size:5.1px;line-height:6px;font-weight:bold;transform:scaleY(1.2);transform-origin:0 50%;transform-origin:100% 50%;color:#111">0</div>
<svg class="a" style="left:151px;top:122.3px" width="7" height="6"><rect x="1.5" y="0.5" width="4" height="4" fill="#d8d0dc"/><rect x="2" y="1" width="3" height="1" fill="#5a4a70"/><rect x="2" y="2.8" width="3" height="1" fill="#5a4a70"/><path d="M0.5 5.2 L6 5.2 L6 0.3" stroke="#111" stroke-width="1.2" fill="none"/></svg>
<div class="a" style="left:19.5px;top:125.0px;width:1px;height:7px;background:#b8cab8"></div>
<div class="a" style="left:24.5px;top:129.3px;width:5px;height:5.8px;background:#3a3a78;border-left:1px solid #5a5a30;border-top:1px solid #202040;border-bottom:1px solid #202040"></div>
<div class="a" style="left:26px;top:130.8px;width:2px;height:2.8px;background:#7a70d0"></div>
<div class="a mono" style="left:32.5px;top:129.0px;font-size:5.1px;line-height:6px;font-weight:bold;transform:scaleY(1.2);transform-origin:0 50%;color:#111">usbdev_class.c</div>
<div class="a mono" style="left:80px;width:37px;text-align:right;top:129.0px;font-size:5.1px;line-height:6px;font-weight:bold;transform:scaleY(1.2);transform-origin:0 50%;transform-origin:100% 50%;color:#111">2432</div>
<div class="a mono" style="left:110px;width:28.5px;text-align:right;top:129.0px;font-size:5.1px;line-height:6px;font-weight:bold;transform:scaleY(1.2);transform-origin:0 50%;transform-origin:100% 50%;color:#111">70</div>
<div class="a" style="left:144.3px;top:130.9px;width:2px;height:2px;background:#111;border-radius:50%"></div>
<svg class="a" style="left:151px;top:129.3px" width="7" height="6"><rect x="1.5" y="0.5" width="4" height="4" fill="#d8d0dc"/><rect x="2" y="1" width="3" height="1" fill="#5a4a70"/><rect x="2" y="2.8" width="3" height="1" fill="#5a4a70"/><path d="M0.5 5.2 L6 5.2 L6 0.3" stroke="#111" stroke-width="1.2" fill="none"/></svg>
<div class="a" style="left:19.5px;top:132.0px;width:1px;height:7px;background:#b8cab8"></div>
<div class="a" style="left:24.5px;top:136.3px;width:5px;height:5.8px;background:#3a3a78;border-left:1px solid #5a5a30;border-top:1px solid #202040;border-bottom:1px solid #202040"></div>
<div class="a" style="left:26px;top:137.8px;width:2px;height:2.8px;background:#7a70d0"></div>
<div class="a mono" style="left:32.5px;top:136.0px;font-size:5.1px;line-height:6px;font-weight:bold;transform:scaleY(1.2);transform-origin:0 50%;color:#111">usbdev_class.h</div>
<div class="a mono" style="left:80px;width:37px;text-align:right;top:136.0px;font-size:5.1px;line-height:6px;font-weight:bold;transform:scaleY(1.2);transform-origin:0 50%;transform-origin:100% 50%;color:#111">0</div>
<div class="a mono" style="left:110px;width:28.5px;text-align:right;top:136.0px;font-size:5.1px;line-height:6px;font-weight:bold;transform:scaleY(1.2);transform-origin:0 50%;transform-origin:100% 50%;color:#111">0</div>
<svg class="a" style="left:151px;top:136.3px" width="7" height="6"><rect x="1.5" y="0.5" width="4" height="4" fill="#d8d0dc"/><rect x="2" y="1" width="3" height="1" fill="#5a4a70"/><rect x="2" y="2.8" width="3" height="1" fill="#5a4a70"/><path d="M0.5 5.2 L6 5.2 L6 0.3" stroke="#111" stroke-width="1.2" fill="none"/></svg>
<div class="a" style="left:19.5px;top:139.0px;width:1px;height:7px;background:#b8cab8"></div>
<div class="a" style="left:24.5px;top:143.3px;width:5px;height:5.8px;background:#3a3a78;border-left:1px solid #5a5a30;border-top:1px solid #202040;border-bottom:1px solid #202040"></div>
<div class="a" style="left:26px;top:144.8px;width:2px;height:2.8px;background:#7a70d0"></div>
<div class="a mono" style="left:32.5px;top:143.0px;font-size:5.1px;line-height:6px;font-weight:bold;transform:scaleY(1.2);transform-origin:0 50%;color:#111">usbdev_config.c</div>
<div class="a mono" style="left:80px;width:37px;text-align:right;top:143.0px;font-size:5.1px;line-height:6px;font-weight:bold;transform:scaleY(1.2);transform-origin:0 50%;transform-origin:100% 50%;color:#111">0</div>
<div class="a mono" style="left:110px;width:28.5px;text-align:right;top:143.0px;font-size:5.1px;line-height:6px;font-weight:bold;transform:scaleY(1.2);transform-origin:0 50%;transform-origin:100% 50%;color:#111">1168</div>
<div class="a" style="left:144.3px;top:144.9px;width:2px;height:2px;background:#111;border-radius:50%"></div>
<svg class="a" style="left:151px;top:143.3px" width="7" height="6"><rect x="1.5" y="0.5" width="4" height="4" fill="#d8d0dc"/><rect x="2" y="1" width="3" height="1" fill="#5a4a70"/><rect x="2" y="2.8" width="3" height="1" fill="#5a4a70"/><path d="M0.5 5.2 L6 5.2 L6 0.3" stroke="#111" stroke-width="1.2" fill="none"/></svg>
<div class="a" style="left:19.5px;top:146.0px;width:1px;height:7px;background:#b8cab8"></div>
<div class="a" style="left:24.5px;top:150.3px;width:5px;height:5.8px;background:#3a3a78;border-left:1px solid #5a5a30;border-top:1px solid #202040;border-bottom:1px solid #202040"></div>
<div class="a" style="left:26px;top:151.8px;width:2px;height:2.8px;background:#7a70d0"></div>
<div class="a mono" style="left:32.5px;top:150.0px;font-size:5.1px;line-height:6px;font-weight:bold;transform:scaleY(1.2);transform-origin:0 50%;color:#111">usbdev_config.h</div>
<div class="a mono" style="left:80px;width:37px;text-align:right;top:150.0px;font-size:5.1px;line-height:6px;font-weight:bold;transform:scaleY(1.2);transform-origin:0 50%;transform-origin:100% 50%;color:#111">0</div>
<div class="a mono" style="left:110px;width:28.5px;text-align:right;top:150.0px;font-size:5.1px;line-height:6px;font-weight:bold;transform:scaleY(1.2);transform-origin:0 50%;transform-origin:100% 50%;color:#111">0</div>
<svg class="a" style="left:151px;top:150.3px" width="7" height="6"><rect x="1.5" y="0.5" width="4" height="4" fill="#d8d0dc"/><rect x="2" y="1" width="3" height="1" fill="#5a4a70"/><rect x="2" y="2.8" width="3" height="1" fill="#5a4a70"/><path d="M0.5 5.2 L6 5.2 L6 0.3" stroke="#111" stroke-width="1.2" fill="none"/></svg>
<div class="a" style="left:19.5px;top:153.0px;width:1px;height:7px;background:#b8cab8"></div>
<div class="a" style="left:24.5px;top:157.3px;width:5px;height:5.8px;background:#3a3a78;border-left:1px solid #5a5a30;border-top:1px solid #202040;border-bottom:1px solid #202040"></div>
<div class="a" style="left:26px;top:158.8px;width:2px;height:2.8px;background:#7a70d0"></div>
<div class="a mono" style="left:32.5px;top:157.0px;font-size:5.1px;line-height:6px;font-weight:bold;transform:scaleY(1.2);transform-origin:0 50%;color:#111">usbdev_control.c</div>
<div class="a mono" style="left:80px;width:37px;text-align:right;top:157.0px;font-size:5.1px;line-height:6px;font-weight:bold;transform:scaleY(1.2);transform-origin:0 50%;transform-origin:100% 50%;color:#111">1864</div>
<div class="a mono" style="left:110px;width:28.5px;text-align:right;top:157.0px;font-size:5.1px;line-height:6px;font-weight:bold;transform:scaleY(1.2);transform-origin:0 50%;transform-origin:100% 50%;color:#111">270</div>
<div class="a" style="left:144.3px;top:158.9px;width:2px;height:2px;background:#111;border-radius:50%"></div>
<svg class="a" style="left:151px;top:157.3px" width="7" height="6"><rect x="1.5" y="0.5" width="4" height="4" fill="#d8d0dc"/><rect x="2" y="1" width="3" height="1" fill="#5a4a70"/><rect x="2" y="2.8" width="3" height="1" fill="#5a4a70"/><path d="M0.5 5.2 L6 5.2 L6 0.3" stroke="#111" stroke-width="1.2" fill="none"/></svg>
<div class="a" style="left:19.5px;top:160.0px;width:1px;height:7px;background:#b8cab8"></div>
<div class="a" style="left:24.5px;top:164.3px;width:5px;height:5.8px;background:#3a3a78;border-left:1px solid #5a5a30;border-top:1px solid #202040;border-bottom:1px solid #202040"></div>
<div class="a" style="left:26px;top:165.8px;width:2px;height:2.8px;background:#7a70d0"></div>
<div class="a mono" style="left:32.5px;top:164.0px;font-size:5.1px;line-height:6px;font-weight:bold;transform:scaleY(1.2);transform-origin:0 50%;color:#111">usbdev_control.h</div>
<div class="a mono" style="left:80px;width:37px;text-align:right;top:164.0px;font-size:5.1px;line-height:6px;font-weight:bold;transform:scaleY(1.2);transform-origin:0 50%;transform-origin:100% 50%;color:#111">0</div>
<div class="a mono" style="left:110px;width:28.5px;text-align:right;top:164.0px;font-size:5.1px;line-height:6px;font-weight:bold;transform:scaleY(1.2);transform-origin:0 50%;transform-origin:100% 50%;color:#111">0</div>
<svg class="a" style="left:151px;top:164.3px" width="7" height="6"><rect x="1.5" y="0.5" width="4" height="4" fill="#d8d0dc"/><rect x="2" y="1" width="3" height="1" fill="#5a4a70"/><rect x="2" y="2.8" width="3" height="1" fill="#5a4a70"/><path d="M0.5 5.2 L6 5.2 L6 0.3" stroke="#111" stroke-width="1.2" fill="none"/></svg>
<div class="a" style="left:19.5px;top:167.0px;width:1px;height:7px;background:#b8cab8"></div>
<div class="a" style="left:24.5px;top:171.3px;width:5px;height:5.8px;background:#3a3a78;border-left:1px solid #5a5a30;border-top:1px solid #202040;border-bottom:1px solid #202040"></div>
<div class="a" style="left:26px;top:172.8px;width:2px;height:2.8px;background:#7a70d0"></div>
<div class="a mono" style="left:32.5px;top:171.0px;font-size:5.1px;line-height:6px;font-weight:bold;transform:scaleY(1.2);transform-origin:0 50%;color:#111">usbdev_isr.c</div>
<div class="a mono" style="left:80px;width:37px;text-align:right;top:171.0px;font-size:5.1px;line-height:6px;font-weight:bold;transform:scaleY(1.2);transform-origin:0 50%;transform-origin:100% 50%;color:#111">492</div>
<div class="a mono" style="left:110px;width:28.5px;text-align:right;top:171.0px;font-size:5.1px;line-height:6px;font-weight:bold;transform:scaleY(1.2);transform-origin:0 50%;transform-origin:100% 50%;color:#111">0</div>
<div class="a" style="left:144.3px;top:172.9px;width:2px;height:2px;background:#111;border-radius:50%"></div>
<svg class="a" style="left:151px;top:171.3px" width="7" height="6"><rect x="1.5" y="0.5" width="4" height="4" fill="#d8d0dc"/><rect x="2" y="1" width="3" height="1" fill="#5a4a70"/><rect x="2" y="2.8" width="3" height="1" fill="#5a4a70"/><path d="M0.5 5.2 L6 5.2 L6 0.3" stroke="#111" stroke-width="1.2" fill="none"/></svg>
<div class="a" style="left:19.5px;top:174.0px;width:1px;height:7px;background:#b8cab8"></div>
<div class="a" style="left:24.5px;top:178.3px;width:5px;height:5.8px;background:#3a3a78;border-left:1px solid #5a5a30;border-top:1px solid #202040;border-bottom:1px solid #202040"></div>
<div class="a" style="left:26px;top:179.8px;width:2px;height:2.8px;background:#7a70d0"></div>
<div class="a mono" style="left:32.5px;top:178.0px;font-size:5.1px;line-height:6px;font-weight:bold;transform:scaleY(1.2);transform-origin:0 50%;color:#111">usbdev_isr.h</div>
<div class="a mono" style="left:80px;width:37px;text-align:right;top:178.0px;font-size:5.1px;line-height:6px;font-weight:bold;transform:scaleY(1.2);transform-origin:0 50%;transform-origin:100% 50%;color:#111">0</div>
<div class="a mono" style="left:110px;width:28.5px;text-align:right;top:178.0px;font-size:5.1px;line-height:6px;font-weight:bold;transform:scaleY(1.2);transform-origin:0 50%;transform-origin:100% 50%;color:#111">0</div>
<svg class="a" style="left:151px;top:178.3px" width="7" height="6"><rect x="1.5" y="0.5" width="4" height="4" fill="#d8d0dc"/><rect x="2" y="1" width="3" height="1" fill="#5a4a70"/><rect x="2" y="2.8" width="3" height="1" fill="#5a4a70"/><path d="M0.5 5.2 L6 5.2 L6 0.3" stroke="#111" stroke-width="1.2" fill="none"/></svg>
<div class="a" style="left:9.3px;top:185.8px;width:4.5px;height:4.5px;border:1px solid #b8c0b8;background:#e8f0e8"></div>
<div class="a" style="left:10.3px;top:187.8px;width:2.5px;height:0.8px;background:#777"></div>
<svg class="a" style="left:15px;top:185.5px" width="8" height="7"><path d="M0.6 1.2 L3 1.2 L3.8 2 L7 2 L7 6 L0.6 6Z" fill="#e8d060" stroke="#6a5a30" stroke-width="0.8"/><path d="M1.2 3.2 L7.6 3.2 L6.8 6 L0.6 6Z" fill="#f8ec98" stroke="#6a5a30" stroke-width="0.6"/></svg>
<div class="a mono" style="left:24.2px;top:185.0px;font-size:5.1px;line-height:6px;font-weight:bold;transform:scaleY(1.2);transform-origin:0 50%;color:#111">eflash</div>
<div class="a mono" style="left:80px;width:37px;text-align:right;top:185.0px;font-size:5.1px;line-height:6px;font-weight:bold;transform:scaleY(1.2);transform-origin:0 50%;transform-origin:100% 50%;color:#111">1K</div>
<div class="a mono" style="left:110px;width:28.5px;text-align:right;top:185.0px;font-size:5.1px;line-height:6px;font-weight:bold;transform:scaleY(1.2);transform-origin:0 50%;transform-origin:100% 50%;color:#111">1K</div>
<div class="a" style="left:144.3px;top:186.9px;width:2px;height:2px;background:#111;border-radius:50%"></div>
<svg class="a" style="left:151px;top:185.3px" width="7" height="6"><rect x="1.5" y="0.5" width="4" height="4" fill="#d8d0dc"/><rect x="2" y="1" width="3" height="1" fill="#5a4a70"/><rect x="2" y="2.8" width="3" height="1" fill="#5a4a70"/><path d="M0.5 5.2 L6 5.2 L6 0.3" stroke="#111" stroke-width="1.2" fill="none"/></svg>
<div class="a" style="left:19.5px;top:188.0px;width:1px;height:7px;background:#b8cab8"></div>
<div class="a" style="left:24.5px;top:192.3px;width:5px;height:5.8px;background:#3a3a78;border-left:1px solid #5a5a30;border-top:1px solid #202040;border-bottom:1px solid #202040"></div>
<div class="a" style="left:26px;top:193.8px;width:2px;height:2.8px;background:#7a70d0"></div>
<div class="a mono" style="left:32.5px;top:192.0px;font-size:5.1px;line-height:6px;font-weight:bold;transform:scaleY(1.2);transform-origin:0 50%;color:#111">eflash.c</div>
<div class="a mono" style="left:80px;width:37px;text-align:right;top:192.0px;font-size:5.1px;line-height:6px;font-weight:bold;transform:scaleY(1.2);transform-origin:0 50%;transform-origin:100% 50%;color:#111">216</div>
<div class="a mono" style="left:110px;width:28.5px;text-align:right;top:192.0px;font-size:5.1px;line-height:6px;font-weight:bold;transform:scaleY(1.2);transform-origin:0 50%;transform-origin:100% 50%;color:#111">0</div>
<div class="a" style="left:144.3px;top:193.9px;width:2px;height:2px;background:#111;border-radius:50%"></div>
<svg class="a" style="left:151px;top:192.3px" width="7" height="6"><rect x="1.5" y="0.5" width="4" height="4" fill="#d8d0dc"/><rect x="2" y="1" width="3" height="1" fill="#5a4a70"/><rect x="2" y="2.8" width="3" height="1" fill="#5a4a70"/><path d="M0.5 5.2 L6 5.2 L6 0.3" stroke="#111" stroke-width="1.2" fill="none"/></svg>
<div class="a" style="left:19.5px;top:195.0px;width:1px;height:7px;background:#b8cab8"></div>
<div class="a" style="left:24.5px;top:199.3px;width:5px;height:5.8px;background:#3a3a78;border-left:1px solid #5a5a30;border-top:1px solid #202040;border-bottom:1px solid #202040"></div>
<div class="a" style="left:26px;top:200.8px;width:2px;height:2.8px;background:#7a70d0"></div>
<div class="a mono" style="left:32.5px;top:199.0px;font-size:5.1px;line-height:6px;font-weight:bold;transform:scaleY(1.2);transform-origin:0 50%;color:#111">eflash.h</div>
<div class="a mono" style="left:80px;width:37px;text-align:right;top:199.0px;font-size:5.1px;line-height:6px;font-weight:bold;transform:scaleY(1.2);transform-origin:0 50%;transform-origin:100% 50%;color:#111">0</div>
<div class="a mono" style="left:110px;width:28.5px;text-align:right;top:199.0px;font-size:5.1px;line-height:6px;font-weight:bold;transform:scaleY(1.2);transform-origin:0 50%;transform-origin:100% 50%;color:#111">0</div>
<svg class="a" style="left:151px;top:199.3px" width="7" height="6"><rect x="1.5" y="0.5" width="4" height="4" fill="#d8d0dc"/><rect x="2" y="1" width="3" height="1" fill="#5a4a70"/><rect x="2" y="2.8" width="3" height="1" fill="#5a4a70"/><path d="M0.5 5.2 L6 5.2 L6 0.3" stroke="#111" stroke-width="1.2" fill="none"/></svg>
<div class="a" style="left:19.5px;top:202.0px;width:1px;height:7px;background:#b8cab8"></div>
<div class="a" style="left:24.5px;top:206.3px;width:5px;height:5.8px;background:#3a3a78;border-left:1px solid #5a5a30;border-top:1px solid #202040;border-bottom:1px solid #202040"></div>
<div class="a" style="left:26px;top:207.8px;width:2px;height:2.8px;background:#7a70d0"></div>
<div class="a mono" style="left:32.5px;top:206.0px;font-size:5.1px;line-height:6px;font-weight:bold;transform:scaleY(1.2);transform-origin:0 50%;color:#111">eflash_api.c</div>
<div class="a mono" style="left:80px;width:37px;text-align:right;top:206.0px;font-size:5.1px;line-height:6px;font-weight:bold;transform:scaleY(1.2);transform-origin:0 50%;transform-origin:100% 50%;color:#111">696</div>
<div class="a mono" style="left:110px;width:28.5px;text-align:right;top:206.0px;font-size:5.1px;line-height:6px;font-weight:bold;transform:scaleY(1.2);transform-origin:0 50%;transform-origin:100% 50%;color:#111">512</div>
<div class="a" style="left:144.3px;top:207.9px;width:2px;height:2px;background:#111;border-radius:50%"></div>
<svg class="a" style="left:151px;top:206.3px" width="7" height="6"><rect x="1.5" y="0.5" width="4" height="4" fill="#d8d0dc"/><rect x="2" y="1" width="3" height="1" fill="#5a4a70"/><rect x="2" y="2.8" width="3" height="1" fill="#5a4a70"/><path d="M0.5 5.2 L6 5.2 L6 0.3" stroke="#111" stroke-width="1.2" fill="none"/></svg>
</div>
<div class="a" style="left:12px;top:95.8px;width:158px;height:1.3px;background:#3a3a3a"></div>
<div class="a" style="left:12px;top:306px;width:166px;height:6.5px;background:#ececec"></div>
<div class="a mono" style="left:36px;top:306.8px;font-size:5.1px;line-height:6px;font-weight:bold;transform:scaleY(1.2);transform-origin:0 50%;color:#111">50 files</div>
<div class="a mono" style="left:100px;width:30px;text-align:right;top:306.8px;font-size:5.1px;line-height:6px;font-weight:bold;transform:scaleY(1.2);transform-origin:100% 50%;color:#111">54K</div>
<div class="a mono" style="left:122px;width:30px;text-align:right;top:306.8px;font-size:5.1px;line-height:6px;font-weight:bold;transform:scaleY(1.2);transform-origin:100% 50%;color:#111">10K</div>
<svg class="a" style="left:170px;top:306px" width="8" height="7"><path d="M1.5 6.5 L7 1 M4 6.5 L7 3.5" stroke="#b0b0b0" stroke-width="0.8"/></svg>
<div class="a" style="left:187px;top:42px;width:415px;height:277px;background:#dae5f1;border:1px solid #7d8c99;border-radius:4px 4px 0 0"></div>
<div class="a" style="left:188px;top:43px;width:413px;height:15px;background:linear-gradient(#dfe9f4,#d6e2ef);border-radius:3px 3px 0 0"></div>
<svg class="a" style="left:192px;top:47px" width="9" height="9"><rect x="0" y="0" width="8" height="8.5" fill="#1a2068"/><rect x="0" y="0" width="1.3" height="8.5" fill="#606030"/><rect x="3.5" y="3.5" width="4" height="4.5" fill="#c8c8b8" stroke="#333" stroke-width="0.6"/></svg>
<div class="a" style="left:202px;top:47.2px;font-size:6.5px;line-height:9px;color:#3e4c5c">main.c</div>
<div class="a" style="left:548.5px;top:47.5px;width:15px;height:8.5px;background:linear-gradient(#dde8f4,#cfdcea);border:1px solid #b9c9da;border-radius:2px"></div>
<div class="a" style="left:553.5px;top:51.5px;width:5px;height:2.5px;border:1px solid #8a8f96;border-radius:1px"></div>
<div class="a" style="left:565.3px;top:47.5px;width:15px;height:8.5px;background:linear-gradient(#dde8f4,#cfdcea);border:1px solid #b9c9da;border-radius:2px"></div>
<div class="a" style="left:570.3px;top:49.5px;width:5px;height:4.5px;border:1px solid #8a8f96;border-top-width:2px"></div>
<div class="a" style="left:582px;top:47.5px;width:15px;height:8.5px;background:linear-gradient(#dde8f4,#cfdcea);border:1px solid #b9c9da;border-radius:2px"></div>
<div class="a" style="left:587px;top:49.5px;width:5px;height:4.5px;border:1px solid #8a8f96"></div>
<div class="a" style="left:191px;top:57px;width:407px;height:15px;background:#f0f0f0;border-bottom:1px solid #e0e0e0"></div>
<svg class="a" style="left:187px;top:60.3px" width="120" height="10"><path d="M8.5 9 Q8.5 4.5 11 1.5 Q12 5 14.5 8 L12.5 9Z" fill="#d8401c"/><path d="M8.5 9 Q8.3 6.5 10 5.5 L11 9Z" fill="#e8b448"/><path d="M18.5 3 L22.5 3 L20.5 6Z" fill="#111"/><path d="M28 1.5 Q26.5 1.5 26.8 4.7 Q26.5 8 28 8 M31.5 1.5 Q33 1.5 32.7 4.7 Q33 8 31.5 8" stroke="#2a2ad8" stroke-width="1.3" fill="none"/><path d="M37 3 L41 3 L39 6Z" fill="#111"/><path d="M45.5 8 L45.5 2 L47.8 5 L50 2 L50 8" stroke="#1a7a2a" stroke-width="1.3" fill="none"/><rect x="51" y="7" width="1.2" height="1.2" fill="#1a7a2a"/><path d="M56 3 L60 3 L58 6Z" fill="#111"/><rect x="64.5" y="0.5" width="7" height="8.5" fill="#d8d8e0" stroke="#666" stroke-width="1"/><rect x="66" y="3" width="4" height="1" fill="#c04050"/><rect x="66" y="5" width="4" height="1" fill="#5060c0"/><rect x="66" y="7" width="4" height="1" fill="#c04050"/><path d="M75 3 L79 3 L77 6Z" fill="#111"/><rect x="83" y="4.5" width="4.5" height="4" fill="#555"/><path d="M85.5 4.5 L85.5 2.5 Q86.5 0.5 88.5 1.5" stroke="#555" stroke-width="1.2" fill="none"/><path d="M93 3 L97 3 L95 6Z" fill="#111"/></svg>
<div class="a mono" style="left:287px;top:62.5px;font-size:5px;line-height:7px;font-weight:bold;color:#333;transform:scaleY(1.25);transform-origin:0 50%">Path:</div>
<div class="a" style="left:304px;top:59.5px;width:280px;height:12px;background:linear-gradient(#f2f2f2,#f8f8f8);border-top:1px solid #b8b0b0;border-left:1px solid #c8c8c8"></div>
<div class="a mono" style="left:306px;top:62.5px;font-size:5px;line-height:7px;color:#111;transform:scaleY(1.25);transform-origin:0 50%">D:\Projects\CCM3310\Demo\DemoCOS\COS\tj_ccore\main.c</div>
<svg class="a" style="left:586px;top:62.5px" width="8" height="8"><path d="M4 0.8 L7.2 4 L4 7.2 L0.8 4Z" fill="none" stroke="#444" stroke-width="1"/></svg>
<div class="a" style="left:191px;top:72px;width:407px;height:234px;background:#fff"></div>
<div class="a" style="left:197px;top:72px;width:1px;height:234px;background:#f2f2f2"></div>
<div class="a" style="left:591px;top:72px;width:7px;height:234px;background:#fbfbfb"></div>
<div class="a" style="left:592px;top:74px;width:6px;height:5px;background:#e8e8e8;border:1.2px solid #333;border-radius:1px"></div>
<div class="a" style="left:591px;top:83px;width:7px;height:9px;background:#fff;border-top:1px solid #ddd;border-bottom:1px solid #777"></div>
<svg class="a" style="left:592px;top:85px" width="6" height="5"><path d="M0.5 4 L5.5 4 L3 1Z" fill="#111"/></svg>
<div class="a" style="left:191px;top:72px;width:399px;height:234px;overflow:hidden">
<div class="code" style="left:12px;top:4.000000000000003px">{</div>
<div class="code" style="left:12px;top:10.500000000000004px">    <span class="k">UINT8</span> ucISR;</div>
<div class="code" style="left:12px;top:17.000000000000004px">    <span class="k">UINT16</span> recvLen, sendLen;</div>
<div class="code" style="left:12px;top:23.500000000000004px"></div>
<div class="code" style="left:12px;top:30.000000000000004px">    <span class="k">ModuleClk_On(MODULE_CLK_USBC|MODULE_CLK_CRYPTO|MODULE_CLK_TRNG|MODULE_CLK_SM1|MODULE_CLK_SHA</span></div>
<div class="code" style="left:12px;top:36.5px"></div>
<div class="code" style="left:12px;top:43.0px">    <span class="k">SetClk</span>();</div>
<div class="code" style="left:12px;top:49.5px">    <span class="k">set_clkd</span>(<span class="k">g_sys_clk</span>);</div>
<div class="code" style="left:12px;top:55.999999999999986px"></div>
<div class="code" style="left:12px;top:62.499999999999986px">    <span class="k">InitGlobalVariable</span>();</div>
<div class="code" style="left:12px;top:68.99999999999999px"></div>
<div class="code" style="left:12px;top:75.49999999999999px">    <span class="k">USBDev_Init</span>();</div>
<div class="code" style="left:12px;top:81.99999999999999px">    <span class="k">interrupt_config</span>();</div>
<div class="code" style="left:12px;top:88.49999999999999px"></div>
<div class="code" style="left:12px;top:94.99999999999999px">    <span class="b">while</span>(1)</div>
<div class="code" style="left:12px;top:101.49999999999999px">    {</div>
<div class="code" style="left:12px;top:107.99999999999999px">        <span class="b">if</span> (g_ucbUSBRcvStatus &amp; (1&lt;&lt;<span class="k">INT_USB_EP1_OUT</span>))</div>
<div class="code" style="left:12px;top:114.49999999999999px">        {</div>
<div class="code" style="left:12px;top:120.99999999999999px">            g_ucbUSBRcvStatus &amp;= ~(1&lt;&lt;<span class="k">INT_USB_EP1_OUT</span>);</div>
<div class="code" style="left:12px;top:127.49999999999999px">            <span class="k">USBDev_EP1_RX_ISR</span>();</div>
<div class="code" style="left:12px;top:134.0px">        }</div>
<div class="code" style="left:12px;top:140.5px"></div>
<div class="code" style="left:12px;top:147.0px">        <span class="b">if</span> (g_ucbUSBSendStatus &amp; (1&lt;&lt;<span class="k">INT_USB_EP1_IN</span>))</div>
<div class="code" style="left:12px;top:153.5px">        {</div>
<div class="code" style="left:12px;top:160.0px">            g_ucbUSBSendStatus &amp;= (~(1&lt;&lt;<span class="k">INT_USB_EP1_IN</span>);</div>
<div class="code" style="left:12px;top:166.5px">            <span class="k">USBDev_EP1_TX_ISR</span>();</div>
<div class="code" style="left:12px;top:173.0px">        }</div>
<div class="code" style="left:12px;top:179.5px"></div>
<div class="code" style="left:12px;top:186.0px">        <span class="r">//wait for data buf empty,then receive data</span></div>
<div class="code" style="left:12px;top:192.5px">        <span class="b">if</span> (gpram_msgflags1 &amp; 0x8)  <span class="r">//data received</span></div>
<div class="code" style="left:12px;top:199.0px">        {</div>
<div class="code" style="left:12px;top:205.5px">            <span class="r">//gpram_msgflags1 &amp;= 0xF7;</span></div>
<div class="code" style="left:12px;top:212.0px">            <span class="k">USBDev_ReadData</span>();</div>
<div class="code" style="left:12px;top:218.5px">        }</div>
</div>
<div class="a" style="left:191px;top:307px;width:407px;height:8px;background:#f6f6f4;border-top:1px solid #fafafa"></div>
<div class="a" style="left:191px;top:307.5px;width:72px;height:7.5px;background:#f1f1f1"></div>
<div class="a" style="left:264px;top:307.5px;width:113px;height:7.5px;background:#efefed;border-right:1px solid #a0a0a0"></div>
<div class="a mono" style="left:194px;top:308.6px;font-size:5.1px;line-height:6px;font-weight:bold;color:#2a2a2a;transform:scaleY(1.15);transform-origin:0 50%">Line 94</div>
<div class="a mono" style="left:227px;top:308.6px;font-size:5.1px;line-height:6px;font-weight:bold;color:#2a2a2a;transform:scaleY(1.15);transform-origin:0 50%">Col 26</div>
<div class="a" style="left:250.5px;top:307.5px;width:1px;height:7px;background:#a8a8a8"></div>
<div class="a" style="left:253.5px;top:307.5px;width:1px;height:7px;background:#a8a8a8"></div>
<svg class="a" style="left:255px;top:307.5px" width="9" height="8"><path d="M4.5 1.5 L4.5 5.5 L2 3.5Z" fill="#111"/><path d="M8 0 L8 8" stroke="#333" stroke-width="1"/></svg>
<svg class="a" style="left:585px;top:307.5px" width="6" height="8"><path d="M1.5 1.5 L1.5 5.5 L4.5 3.5Z" fill="#111"/></svg>
<svg class="a" style="left:591px;top:306px" width="7" height="9"><rect x="0.5" y="0.5" width="6.5" height="8.5" fill="#f2f2f2" stroke="#777" stroke-width="0.8"/><path d="M2 8 L6.5 3" stroke="#999" stroke-width="0.8"/></svg>
<svg class="a" style="left:591px;top:300px" width="7" height="6"><path d="M1 1.5 L6 1.5 L3.5 4.5Z" fill="#111"/></svg>
<div class="a" style="left:355px;top:164px;width:402px;height:270px;background:#b2d4f0;border:1px solid #3a6e90;border-radius:4px 4px 0 0"></div>
<div class="a" style="left:356px;top:165px;width:400px;height:14px;background:linear-gradient(#bcd3ea,#adc8e4);border-radius:3px 3px 0 0"></div>
<svg class="a" style="left:360px;top:168px" width="9" height="9"><rect x="0" y="0" width="8" height="8.5" fill="#1a2068"/><rect x="0" y="0" width="1.3" height="8.5" fill="#606030"/><rect x="3.5" y="3.5" width="4" height="4.5" fill="#c8c8b8" stroke="#333" stroke-width="0.6"/></svg>
<div class="a" style="left:370px;top:168.2px;font-size:6.5px;line-height:9px;color:#101c2c">algorithm.c</div>
<div class="a" style="left:703.5px;top:168.5px;width:15px;height:8.5px;background:linear-gradient(#c9dcf0,#b3cce6);border:1px solid #9db6d0;border-radius:2px"></div>
<div class="a" style="left:708.5px;top:172.5px;width:5px;height:2.5px;border:1px solid #555;border-radius:1px"></div>
<div class="a" style="left:720.3px;top:168.5px;width:15px;height:8.5px;background:linear-gradient(#c9dcf0,#b3cce6);border:1px solid #9db6d0;border-radius:2px"></div>
<div class="a" style="left:725.3px;top:170.5px;width:5px;height:4.5px;border:1px solid #555;border-top-width:2px"></div>
<div class="a" style="left:737px;top:168.5px;width:15px;height:8.5px;background:linear-gradient(#e58a70,#cf4a30 60%,#d9583c);border:1px solid #9a4a3a;border-radius:2px"></div>
<svg class="a" style="left:742px;top:170.0px" width="6" height="6"><path d="M1 1 L5 5 M5 1 L1 5" stroke="#fff" stroke-width="1.6"/></svg>
<div class="a" style="left:359px;top:178px;width:394px;height:15px;background:#f0f0f0;border-bottom:1px solid #e0e0e0"></div>
<svg class="a" style="left:355px;top:181.3px" width="120" height="10"><path d="M8.5 9 Q8.5 4.5 11 1.5 Q12 5 14.5 8 L12.5 9Z" fill="#d8401c"/><path d="M8.5 9 Q8.3 6.5 10 5.5 L11 9Z" fill="#e8b448"/><path d="M18.5 3 L22.5 3 L20.5 6Z" fill="#111"/><path d="M28 1.5 Q26.5 1.5 26.8 4.7 Q26.5 8 28 8 M31.5 1.5 Q33 1.5 32.7 4.7 Q33 8 31.5 8" stroke="#2a2ad8" stroke-width="1.3" fill="none"/><path d="M37 3 L41 3 L39 6Z" fill="#111"/><path d="M45.5 8 L45.5 2 L47.8 5 L50 2 L50 8" stroke="#1a7a2a" stroke-width="1.3" fill="none"/><rect x="51" y="7" width="1.2" height="1.2" fill="#1a7a2a"/><path d="M56 3 L60 3 L58 6Z" fill="#111"/><rect x="64.5" y="0.5" width="7" height="8.5" fill="#d8d8e0" stroke="#666" stroke-width="1"/><rect x="66" y="3" width="4" height="1" fill="#c04050"/><rect x="66" y="5" width="4" height="1" fill="#5060c0"/><rect x="66" y="7" width="4" height="1" fill="#c04050"/><path d="M75 3 L79 3 L77 6Z" fill="#111"/><rect x="83" y="4.5" width="4.5" height="4" fill="#555"/><path d="M85.5 4.5 L85.5 2.5 Q86.5 0.5 88.5 1.5" stroke="#555" stroke-width="1.2" fill="none"/><path d="M93 3 L97 3 L95 6Z" fill="#111"/></svg>
<div class="a mono" style="left:455px;top:183.5px;font-size:5px;line-height:7px;font-weight:bold;color:#333;transform:scaleY(1.25);transform-origin:0 50%">Path:</div>
<div class="a" style="left:472px;top:180.5px;width:267px;height:12px;background:linear-gradient(#f2f2f2,#f8f8f8);border-top:1px solid #b8b0b0;border-left:1px solid #c8c8c8"></div>
<div class="a mono" style="left:474px;top:183.5px;font-size:5px;line-height:7px;color:#111;transform:scaleY(1.25);transform-origin:0 50%">D:\Projects\CCM3310\Demo\DemoCOS\COS\ALGORITHM\algorithm.c</div>
<svg class="a" style="left:741px;top:183.5px" width="8" height="8"><path d="M4 0.8 L7.2 4 L4 7.2 L0.8 4Z" fill="none" stroke="#444" stroke-width="1"/></svg>
<div class="a" style="left:359px;top:193px;width:394px;height:228px;background:#fff"></div>
<div class="a" style="left:365px;top:193px;width:1px;height:228px;background:#f2f2f2"></div>
<div class="a" style="left:746px;top:193px;width:7px;height:228px;background:#fbfbfb"></div>
<div class="a" style="left:747px;top:195px;width:6px;height:5px;background:#e8e8e8;border:1.2px solid #333;border-radius:1px"></div>
<div class="a" style="left:746px;top:222px;width:7px;height:1px;background:#888"></div>
<div class="a" style="left:746px;top:204px;width:7px;height:9px;background:#fff;border-top:1px solid #ddd;border-bottom:1px solid #777"></div>
<svg class="a" style="left:747px;top:206px" width="6" height="5"><path d="M0.5 4 L5.5 4 L3 1Z" fill="#111"/></svg>
<div class="a" style="left:359px;top:193px;width:386px;height:228px;overflow:hidden">
<div class="code" style="left:12px;top:4.8px">        <span class="k">memcpy</span>(random+i•4, temp, (len%4));</div>
<div class="code" style="left:12px;top:11.3px">    }</div>
<div class="code" style="left:12px;top:17.8px">}</div>
<div class="code" style="left:12px;top:24.3px"></div>
<div class="code" style="left:12px;top:30.8px"><span class="k">BOOLEAN sm1_encrypt_ecb</span>(<span class="k">UINT8</span> •key, <span class="k">UINT8</span> •plain, <span class="k">UINT8</span> •cipher, <span class="k">UINT32</span> length)</div>
<div class="code" style="left:12px;top:37.3px">{</div>
<div class="code" style="left:12px;top:43.8px">    <span class="k">UINT32</span> sm1EK[4];</div>
<div class="code" style="left:12px;top:50.3px">    <span class="k">UINT32</span> sm1AK[4];</div>
<div class="code" style="left:12px;top:56.8px">    <span class="k">UINT32</span> sm1SK[4];</div>
<div class="code" style="left:12px;top:63.3px">    <span class="k">UINT32</span> sm1IV[4];<span style="display:inline-block;width:1px;height:6px;background:#000;vertical-align:-1px"></span></div>
<div class="code" style="left:12px;top:69.8px"></div>
<div class="code" style="left:12px;top:76.3px">    <span class="b">if</span> (length%16 != 0)</div>
<div class="code" style="left:12px;top:82.8px">        <span class="b">return</span> <span class="k">FALSE</span>;</div>
<div class="code" style="left:12px;top:89.3px"></div>
<div class="code" style="left:12px;top:95.8px">    <span class="k">memcpy</span>((<span class="k">UINT8</span> •)sm1EK, key, 16);</div>
<div class="code" style="left:12px;top:102.3px">    <span class="k">memset</span>((<span class="k">UINT8</span>•)sm1AK, 0x00, 16);</div>
<div class="code" style="left:12px;top:108.8px">    <span class="k">memset</span>((<span class="k">UINT8</span>•)sm1SK, 0x00, 16);</div>
<div class="code" style="left:12px;top:115.3px">    <span class="k">memset</span>((<span class="k">UINT8</span>•)sm1IV, 0x00, 16);</div>
<div class="code" style="left:12px;top:121.8px"></div>
<div class="code" style="left:12px;top:128.3px">    <span class="k">memcpy</span>((<span class="k">UINT8</span>•)g_algorithm_buf1, plain, length);</div>
<div class="code" style="left:12px;top:134.8px">    SM1_EnDecrypt(SM1_MODE_EN,SM1_MODE_ECB, 0,sm1EK,sm1AK,sm1SK,</div>
<div class="code" style="left:12px;top:141.3px">                sm1IV,g_algorithm_buf1,  g_algorithm_buf1, length);</div>
<div class="code" style="left:12px;top:147.8px">    <span class="k">memcpy</span>(cipher, (<span class="k">UINT8</span>•)g_algorithm_buf1, length);</div>
<div class="code" style="left:12px;top:154.3px"></div>
<div class="code" style="left:12px;top:160.8px">    <span class="b">return</span> <span class="k">TRUE</span>;</div>
<div class="code" style="left:12px;top:167.3px">}</div>
<div class="code" style="left:12px;top:173.8px"></div>
<div class="code" style="left:12px;top:180.3px"><span class="k">BOOLEAN sm1_decrypt_ecb</span>(<span class="k">UINT8</span> •key, <span class="k">UINT8</span> •cipher, <span class="k">UINT8</span> •plain, <span class="k">UINT32</span> length)</div>
<div class="code" style="left:12px;top:186.8px">{</div>
<div class="code" style="left:12px;top:193.3px">    <span class="k">UINT32</span> sm1EK[4];</div>
<div class="code" style="left:12px;top:199.8px">    <span class="k">UINT32</span> sm1AK[4];</div>
<div class="code" style="left:12px;top:206.3px">    <span class="k">UINT32</span> sm1SK[4];</div>
<div class="code" style="left:12px;top:212.8px">    <span class="k">UINT32</span> sm1IV[4];</div>
</div>
<div class="a" style="left:359px;top:422px;width:394px;height:8px;background:#f6f6f4;border-top:1px solid #fafafa"></div>
<div class="a" style="left:359px;top:422.5px;width:72px;height:7.5px;background:#f1f1f1"></div>
<div class="a" style="left:432px;top:422.5px;width:113px;height:7.5px;background:#efefed;border-right:1px solid #a0a0a0"></div>
<div class="a mono" style="left:362px;top:423.6px;font-size:5.1px;line-height:6px;font-weight:bold;color:#2a2a2a;transform:scaleY(1.15);transform-origin:0 50%">Line 70</div>
<div class="a mono" style="left:395px;top:423.6px;font-size:5.1px;line-height:6px;font-weight:bold;color:#2a2a2a;transform:scaleY(1.15);transform-origin:0 50%">Col 21</div>
<div class="a" style="left:418.5px;top:422.5px;width:1px;height:7px;background:#a8a8a8"></div>
<div class="a" style="left:421.5px;top:422.5px;width:1px;height:7px;background:#a8a8a8"></div>
<svg class="a" style="left:423px;top:422.5px" width="9" height="8"><path d="M4.5 1.5 L4.5 5.5 L2 3.5Z" fill="#111"/><path d="M8 0 L8 8" stroke="#333" stroke-width="1"/></svg>
<svg class="a" style="left:740px;top:422.5px" width="6" height="8"><path d="M1.5 1.5 L1.5 5.5 L4.5 3.5Z" fill="#111"/></svg>
<svg class="a" style="left:746px;top:421px" width="7" height="9"><rect x="0.5" y="0.5" width="6.5" height="8.5" fill="#f2f2f2" stroke="#777" stroke-width="0.8"/><path d="M2 8 L6.5 3" stroke="#999" stroke-width="0.8"/></svg>
<svg class="a" style="left:746px;top:415px" width="7" height="6"><path d="M1 1.5 L6 1.5 L3.5 4.5Z" fill="#111"/></svg>
</body></html>
